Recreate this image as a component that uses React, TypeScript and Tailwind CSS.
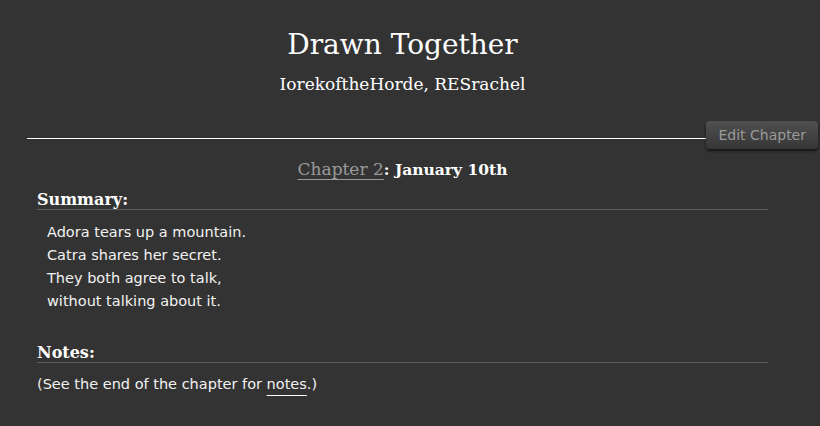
export default function App() {
  const serif = "font-['DejaVu_Serif',Georgia,serif]";
  const sans = "font-['DejaVu_Sans','Lucida_Grande',Verdana,sans-serif]";

  return (
    <div className={`min-h-[426px] w-[820px] bg-[#333333] text-[#f2f2f2] ${sans}`}>
      {/* work heading */}
      <div className={`pr-[15px] pt-[27px] text-center ${serif}`}>
        <h2 className="text-[28px] leading-[36px] text-white">Drawn Together</h2>
        <h3 className="mt-[10px] text-[17px] leading-[22px] text-white">IorekoftheHorde, RESrachel</h3>
      </div>

      {/* divider + edit button */}
      <div className="mt-[26px] flex items-start pl-[27px] pr-[2px]">
        <div className="mt-[17px] h-px flex-1 bg-white" />
        <button className="h-[28px] rounded-[4px] bg-gradient-to-b from-[#505050] to-[#363636] px-[12px] text-[14px] text-[#9a9a9a] shadow-[0_2px_3px_rgba(0,0,0,0.6)]">
          Edit Chapter
        </button>
      </div>

      {/* chapter title */}
      <h3 className={`mt-[8px] pr-[15px] text-center leading-[24px] ${serif}`}>
        <a className="text-[17px] text-[#9a9a9a] underline decoration-[#9a9a9a] underline-offset-[4px]">Chapter 2</a>
        <span className="text-[15.5px] font-bold text-white">: January 10th</span>
      </h3>

      <div className="ml-[37px] mr-[52px]">
        {/* summary */}
        <h3 className={`mt-[9px] border-b border-[#5c5c5c] text-[16px] font-bold leading-[18px] text-white ${serif}`}>
          Summary:
        </h3>
        <blockquote className="ml-[10px] mt-[11px] text-[14.5px] leading-[23px] text-[#f2f2f2]">
          <p>Adora tears up a mountain.</p>
          <p>Catra shares her secret.</p>
          <p>They both agree to talk,</p>
          <p>without talking about it.</p>
        </blockquote>

        {/* notes */}
        <h3 className={`mt-[31px] border-b border-[#5c5c5c] text-[16px] font-bold leading-[18px] text-white ${serif}`}>
          Notes:
        </h3>
        <p className="mt-[10px] text-[14.5px] leading-[23px] text-[#f2f2f2]">
          (See the end of the chapter for{" "}
          <a className="underline decoration-white underline-offset-[6px]">notes</a>.)
        </p>
      </div>
    </div>
  );
}
